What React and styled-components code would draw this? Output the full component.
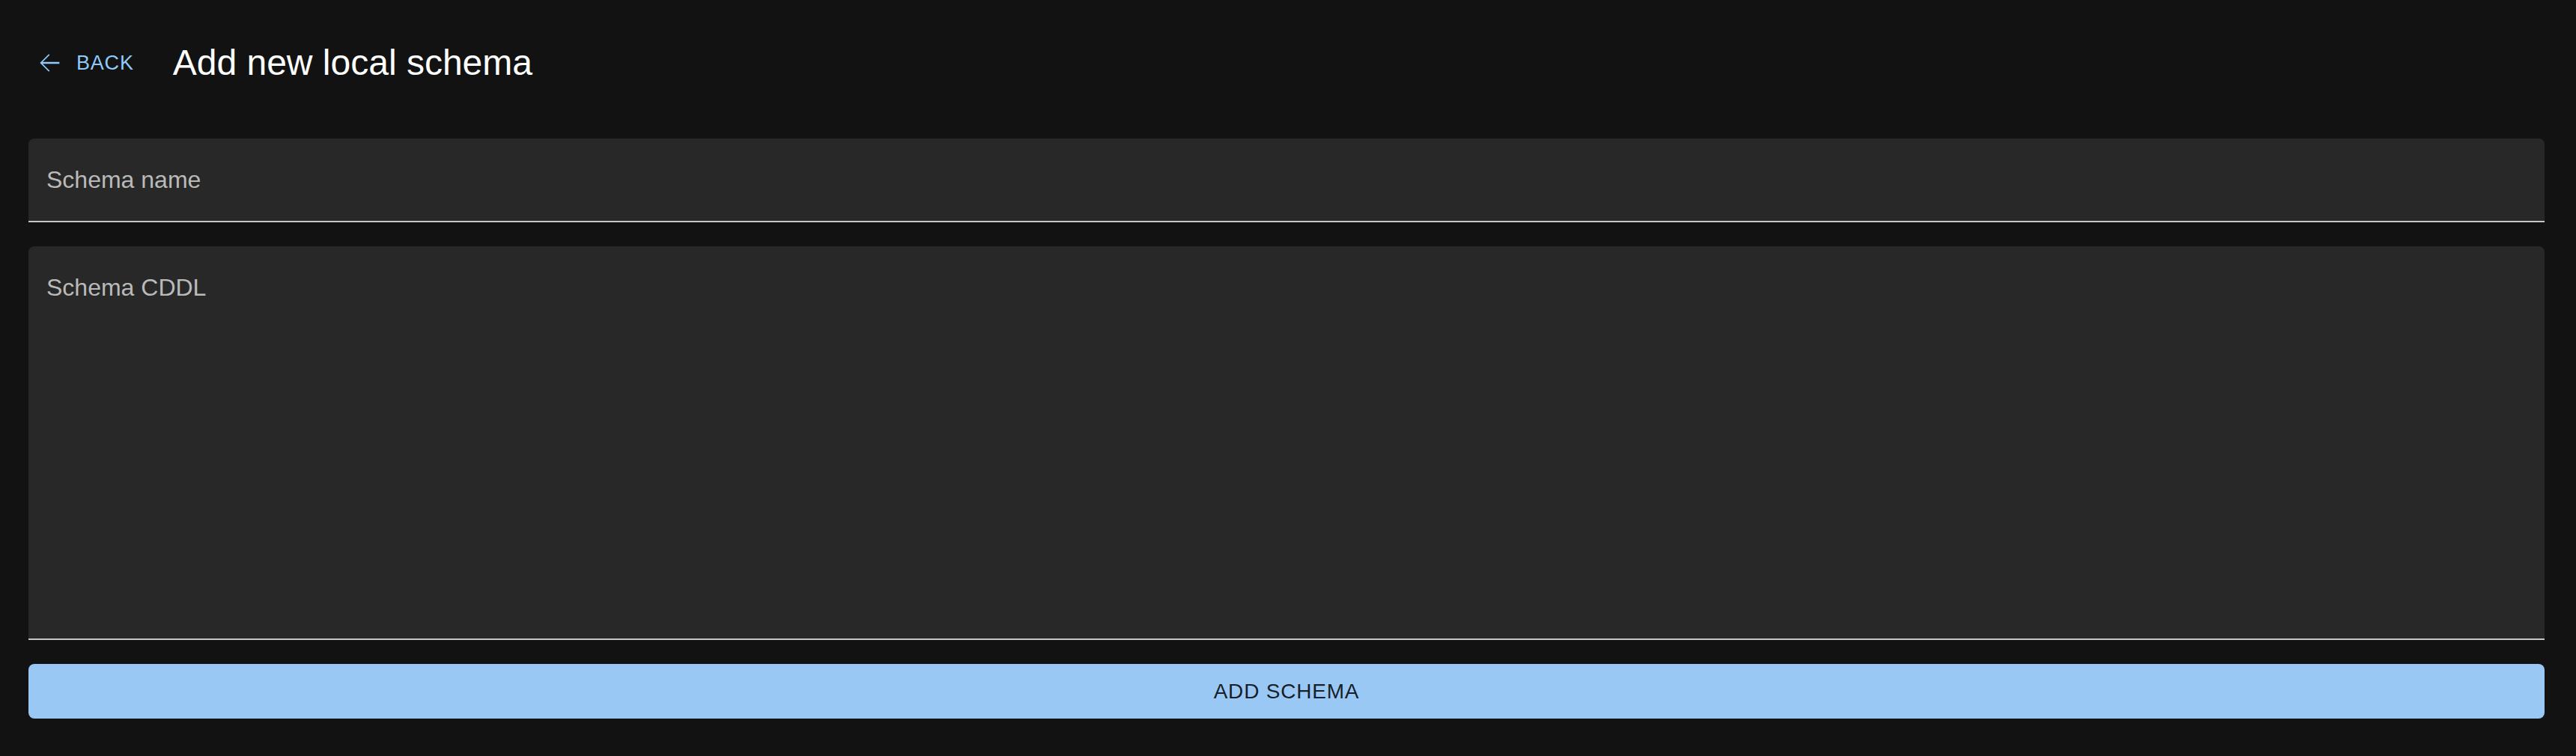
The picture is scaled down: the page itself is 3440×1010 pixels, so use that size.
import React from "react";
import styled, { createGlobalStyle } from "styled-components";

const Global = createGlobalStyle`
  html, body {
    margin: 0;
    padding: 0;
    background: #121212;
  }
  body {
    font-family: "Liberation Sans", Arial, Helvetica, sans-serif;
    color: #ffffff;
  }
  * { box-sizing: border-box; }
`;

const Page = styled.div`
  height: 1010px;
  overflow: hidden;
  background: #121212;
  padding: 48px 42px 0 38px;
`;

const Header = styled.div`
  display: flex;
  align-items: center;
  height: 72px;
`;

const BackButton = styled.button`
  display: inline-flex;
  align-items: center;
  height: 72px;
  padding: 12px 16px;
  border: 0;
  background: transparent;
  color: #90caf9;
  font-family: "Liberation Sans", Arial, sans-serif;
  font-size: 27px;
  line-height: 48px;
  letter-spacing: 0.8px;
  text-transform: uppercase;
  border-radius: 8px;
  cursor: pointer;
`;

const IconSlot = styled.span`
  display: inline-flex;
  width: 40px;
  height: 40px;
  margin-left: -8px;
  margin-right: 16px;
  svg { width: 40px; height: 40px; fill: currentColor; }
`;

const Title = styled.h1`
  margin: 0 0 0 36px;
  font-family: "Liberation Sans", Arial, sans-serif;
  font-weight: 400;
  font-size: 48px;
  line-height: 64px;
  color: #ffffff;
`;

const Form = styled.div`
  display: flex;
  flex-direction: column;
  gap: 32px;
  margin-top: 65px;
`;

const Field = styled.div`
  height: ${(p) => p.$height}px;
  background: #282828;
  border-radius: 8px 8px 0 0;
  border-bottom: 2px solid #c6c6c6;
  padding: 32px 24px 0 24px;
`;

const Label = styled.label`
  display: block;
  font-family: "Liberation Sans", Arial, sans-serif;
  font-size: 32px;
  line-height: 46px;
  color: #bababa;
`;

const SubmitButton = styled.button`
  height: 73px;
  width: 100%;
  border: 0;
  border-radius: 8px;
  background: #9ac8f5;
  color: rgba(0, 0, 0, 0.87);
  font-family: "Liberation Sans", Arial, sans-serif;
  font-size: 28px;
  letter-spacing: 0.8px;
  text-transform: uppercase;
  cursor: pointer;
`;

const ArrowBack = () => (
  <svg viewBox="0 0 24 24" aria-hidden="true">
    <path d="M20 11.25H6.6l5.6-5.6L11.5 4.9 4.4 12l7.1 7.1.7-.75-5.6-5.6H20z" />
  </svg>
);

export default function App() {
  return (
    <>
      <Global />
      <Page>
        <Header>
          <BackButton>
            <IconSlot>
              <ArrowBack />
            </IconSlot>
            Back
          </BackButton>
          <Title>Add new local schema</Title>
        </Header>
        <Form>
          <Field $height={112}>
            <Label>Schema name</Label>
          </Field>
          <Field $height={526}>
            <Label>Schema CDDL</Label>
          </Field>
          <SubmitButton>Add schema</SubmitButton>
        </Form>
      </Page>
    </>
  );
}
